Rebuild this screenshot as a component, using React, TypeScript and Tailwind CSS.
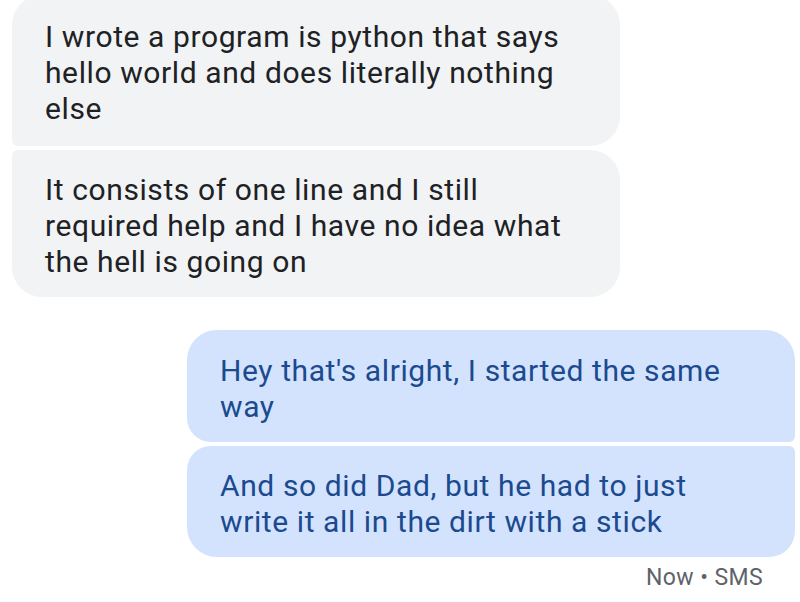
const incoming = [
  ["I wrote a program is python that says", "hello world and does literally nothing", "else"],
  ["It consists of one line and I still", "required help and I have no idea what", "the hell is going on"],
];

const outgoing = [
  ["Hey that's alright, I started the same", "way"],
  ["And so did Dad, but he had to just", "write it all in the dirt with a stick"],
];

function Lines({ lines }: { lines: string[] }) {
  return (
    <>
      {lines.map((l, i) => (
        <div key={i} className="whitespace-nowrap">
          {l}
        </div>
      ))}
    </>
  );
}

export default function App() {
  return (
    <main
      className="w-[800px] h-[602px] overflow-hidden bg-white"
      style={{ fontFamily: "Roboto, 'Noto Sans', sans-serif" }}
    >
      {/* received */}
      <div className="flex flex-col gap-[4px] pl-[12px] -mt-[5px]">
        <div className="w-[608px] bg-[#f1f3f4] text-[#202124] text-[30px] leading-[36px] tracking-[0.6px] pl-[33px] pr-[30px] pt-[24px] pb-[19px] rounded-tl-[30px] rounded-tr-[30px] rounded-br-[30px] rounded-bl-[6px]">
          <Lines lines={incoming[0]} />
        </div>
        <div className="w-[608px] bg-[#f1f3f4] text-[#202124] text-[30px] leading-[36px] tracking-[0.6px] pl-[33px] pr-[30px] pt-[22px] pb-[17px] rounded-tl-[6px] rounded-tr-[30px] rounded-br-[30px] rounded-bl-[30px]">
          <Lines lines={incoming[1]} />
        </div>
      </div>

      {/* sent */}
      <div className="flex flex-col items-end gap-[4px] pr-[5px] mt-[33px]">
        <div className="w-[608px] bg-[#d3e3fd] text-[#1b4a8f] text-[30px] leading-[36px] tracking-[0.6px] pl-[33px] pr-[30px] pt-[23px] pb-[17px] rounded-tl-[30px] rounded-tr-[30px] rounded-bl-[24px] rounded-br-[6px]">
          <Lines lines={outgoing[0]} />
        </div>
        <div className="w-[608px] bg-[#d3e3fd] text-[#1b4a8f] text-[30px] leading-[36px] tracking-[0.6px] pl-[33px] pr-[30px] pt-[22px] pb-[17px] rounded-tl-[24px] rounded-tr-[6px] rounded-bl-[30px] rounded-br-[26px]">
          <Lines lines={outgoing[1]} />
        </div>
        <div className="pr-[32px] pt-[3px] text-[23px] leading-[28px] tracking-[0.4px] text-[#5f6368]">
          Now • SMS
        </div>
      </div>
    </main>
  );
}
